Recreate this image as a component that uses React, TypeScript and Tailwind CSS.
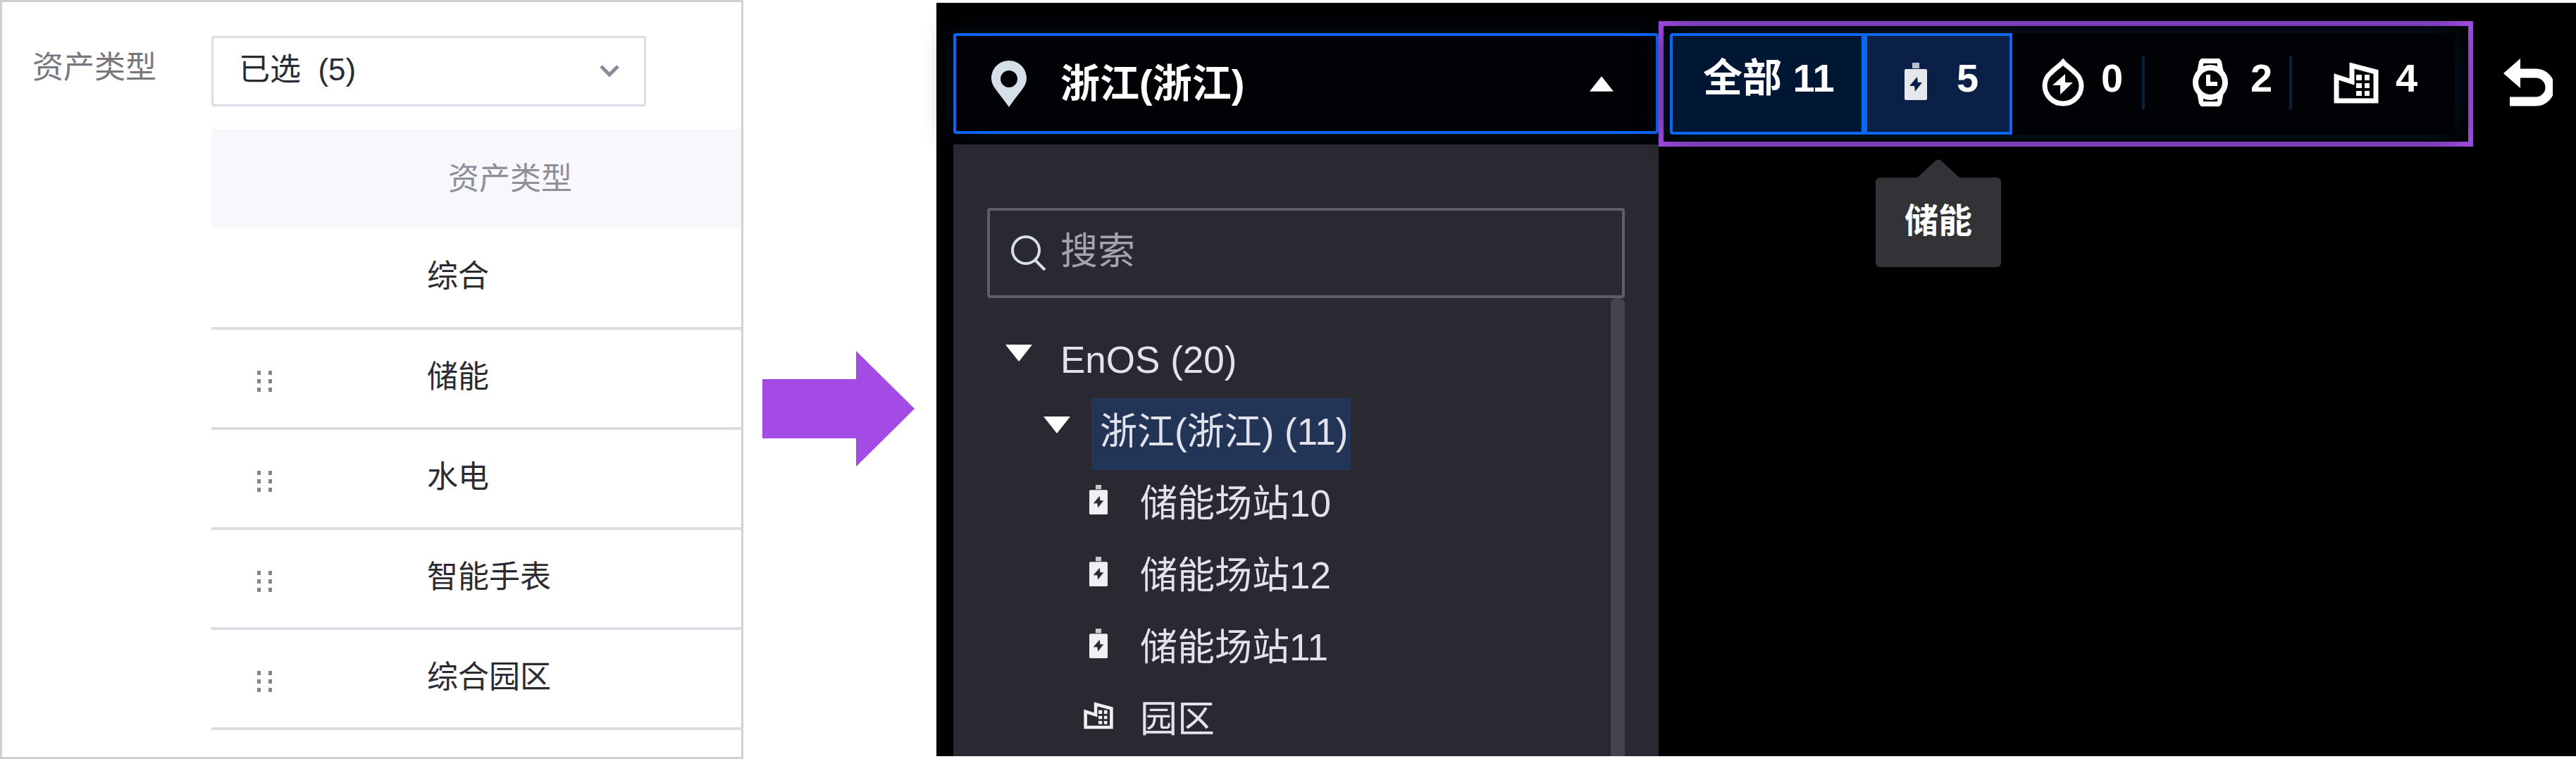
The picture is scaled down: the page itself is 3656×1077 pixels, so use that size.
import type { ReactNode } from "react"

interface IconProps {
  className?: string
}

interface AssetTab {
  name: string
  count: number
  icon: ReactNode
  className: string
}

interface TreeLeaf {
  name: string
  icon: ReactNode
}

function BatteryIcon({ className }: IconProps) {
  return (
    <svg viewBox="0 0 32 53" preserveAspectRatio="none" className={className} fill="currentColor" aria-hidden="true">
      <path d="M11 0h10v8H11z" opacity="0.8" />
      <path
        fillRule="evenodd"
        d="M2 9h28a2 2 0 0 1 2 2v40a2 2 0 0 1-2 2H2a2 2 0 0 1-2-2V11a2 2 0 0 1 2-2zm16 11L7 33h7l1 8 10-13h-6z"
      />
    </svg>
  )
}

function DropIcon({ className }: IconProps) {
  return (
    <svg viewBox="0 0 60 68" className={className} fill="none" aria-hidden="true">
      <path
        d="M30 5C26 10 20 13 12 21a24 24 0 0 0-8 17c0 15 12 26 26 26s26-11 26-26a24 24 0 0 0-8-17C40 13 34 10 30 5z"
        stroke="currentColor"
        strokeWidth="7"
      />
      <path d="M33 22 15 38h11v13l18-17H33z" fill="currentColor" />
    </svg>
  )
}

function WatchIcon({ className }: IconProps) {
  return (
    <svg viewBox="0 0 50 68" className={className} aria-hidden="true">
      <path
        fill="currentColor"
        fillRule="evenodd"
        d="M12 0h26l3 4 3 16-8-4H14l-8 4L9 4zM15 7v4h20V7zM12 68h26l3-4 3-16-8 4H14l-8-4 3 16zM15 57v4h20v-4z"
      />
      <circle cx="25" cy="34" r="21" fill="none" stroke="currentColor" strokeWidth="8" />
      <path d="M22 23v13h13" fill="none" stroke="currentColor" strokeWidth="6" />
    </svg>
  )
}

function BuildingIcon({ className }: IconProps) {
  return (
    <svg viewBox="0 0 64 60" className={className} aria-hidden="true">
      <path
        d="M4 56V22l22 7V6l34 9v41z"
        fill="none"
        stroke="currentColor"
        strokeWidth="7"
      />
      <path fill="currentColor" d="M32 19h8v8h-8zM44 19h7v8h-7zM32 31h8v7h-8zM44 31h7v7h-7zM32 42h8v7h-8zM44 42h7v7h-7z" />
    </svg>
  )
}

function PinIcon({ className }: IconProps) {
  return (
    <svg viewBox="0 0 50 66" className={className} fill="currentColor" aria-hidden="true">
      <path
        fillRule="evenodd"
        d="M25 0C11 0 0 11 0 25c0 12 10 19 25 41 15-22 25-29 25-41C50 11 39 0 25 0zm0 14a12 12 0 1 1 0 24 12 12 0 0 1 0-24z"
      />
    </svg>
  )
}

function SearchIcon({ className }: IconProps) {
  return (
    <svg viewBox="0 0 50 50" className={className} fill="none" stroke="currentColor" strokeWidth="4" aria-hidden="true">
      <circle cx="21" cy="21" r="19" />
      <path d="M34 35 48 49" />
    </svg>
  )
}

function BackIcon({ className }: IconProps) {
  return (
    <svg viewBox="0 0 70 70" className={className} aria-hidden="true">
      <path d="M24 1v42L0 22z" fill="currentColor" />
      <path d="M18 22h28a20 20 0 0 1 0 40H9" fill="none" stroke="currentColor" strokeWidth="13" />
    </svg>
  )
}

function CaretIcon({ className }: IconProps) {
  return (
    <svg viewBox="0 0 38 24" className={className} fill="currentColor" aria-hidden="true">
      <path d="M0 0h38L19 24z" />
    </svg>
  )
}

function DragIcon({ className }: IconProps) {
  return (
    <svg viewBox="0 0 24 34" className={className} fill="currentColor" aria-hidden="true">
      <path d="M1 2h5v6H1zM17 2h5v6h-5zM1 14h5v6H1zM17 14h5v6h-5zM1 26h5v6H1zM17 26h5v6h-5z" />
    </svg>
  )
}

const assetTypes = ["综合", "储能", "水电", "智能手表", "综合园区"]

const leaves: TreeLeaf[] = [
  { name: "储能场站10", icon: <BatteryIcon className="h-[42px] w-[26px]" /> },
  { name: "储能场站12", icon: <BatteryIcon className="h-[42px] w-[26px]" /> },
  { name: "储能场站11", icon: <BatteryIcon className="h-[42px] w-[26px]" /> },
  { name: "园区", icon: <BuildingIcon className="h-10 w-[42px]" /> },
]

const tabs: AssetTab[] = [
  { name: "水电", count: 0, icon: <DropIcon className="h-[68px] w-[60px]" />, className: "w-[188px] pl-[42px]" },
  { name: "智能手表", count: 2, icon: <WatchIcon className="mr-2 h-[68px] w-[50px]" />, className: "w-[209px] pl-[68px]" },
  { name: "综合园区", count: 4, icon: <BuildingIcon className="h-[60px] w-16" />, className: "w-[231px] pl-[59px]" },
]

function AssetTypeCard() {
  return (
    <section className="border-3 border-[#d0d0d0] bg-white pt-12 pl-[43px] text-[44px] text-[#2b2b33]">
      <div className="flex items-start">
        <label htmlFor="asset-type" className="w-[254px] shrink-0 pt-3 leading-[66px] text-[#77777f]">
          资产类型
        </label>
        <div className="relative w-[617px]">
          <select
            id="asset-type"
            className="h-[100px] w-full appearance-none rounded-sm border-3 border-[#dcdce4] bg-white pb-1 pl-9"
          >
            <option>已选{"\u00a0\u00a0"}(5)</option>
          </select>
          <svg
            viewBox="0 0 28 18"
            className="pointer-events-none absolute top-10 right-[38px] h-[18px] w-7"
            fill="none"
            stroke="#8a8a99"
            strokeWidth="5"
            aria-hidden="true"
          >
            <path d="M2 3 14 15 26 3" />
          </svg>
        </div>
      </div>
      <div className="mt-8 pl-[254px]">
        <table className="w-full border-collapse text-left">
          <thead>
            <tr className="h-[141px] bg-[#f7f7fc] text-[#8f8f9c]">
              <th className="w-[306px]" aria-label="排序" />
              <th className="pl-[30px] font-normal">资产类型</th>
            </tr>
          </thead>
          <tbody>
            {assetTypes.map((type, index) => (
              <tr key={type} className="h-[142px] border-b-4 border-[#dcdce4]">
                <td className="pt-2 pl-16">
                  {index > 0 && (
                    <button type="button" aria-label={`拖动${type}`} className="block text-[#858592]">
                      <DragIcon className="h-[34px] w-6" />
                    </button>
                  )}
                </td>
                <td className="pb-1">{type}</td>
              </tr>
            ))}
          </tbody>
        </table>
      </div>
    </section>
  )
}

function LocationPicker() {
  return (
    <div className="flex min-h-0 flex-col pt-[17px]">
      <button
        type="button"
        aria-expanded="true"
        className="flex h-[143px] shrink-0 items-center rounded-sm border-4 border-[#0b66f2] bg-[#010206] pr-[60px] pl-[50px] text-[56px] font-bold text-white shadow-[0_0_36px_#001220]"
      >
        <PinIcon className="h-[66px] w-[50px] text-[#d5dfe8]" />
        <span className="ml-12 grow text-left">浙江(浙江)</span>
        <CaretIcon className="h-[22px] w-[34px] rotate-180" />
      </button>
      <div className="mt-[15px] flex min-h-0 grow flex-col overflow-hidden bg-[#2a2830] px-12 pt-[90px] text-[53px] text-[#e2e2ea]">
        <label className="flex h-[128px] shrink-0 items-center rounded-sm border-4 border-[#5f5d69] pl-[30px]">
          <SearchIcon className="size-[50px] shrink-0 text-[#d5dfe8]" />
          <input
            type="text"
            aria-label="搜索"
            placeholder="搜索"
            className="ml-5 w-full min-w-0 bg-transparent pb-1 outline-none placeholder:text-[#a4a4ae]"
          />
        </label>
        <div className="flex min-h-0 grow">
          <ul className="grow pt-10 leading-[96px]">
            <li>
              <div className="flex h-[102px] pl-[26px]">
                <CaretIcon className="mt-[26px] h-6 w-[38px] text-white" />
                <span className="ml-10">EnOS (20)</span>
              </div>
              <ul>
                <li>
                  <div className="flex h-[102px] pl-20">
                    <CaretIcon className="mt-[26px] h-6 w-[38px] text-white" />
                    <span className="ml-[30px] bg-[#233557] pr-1 pl-3">浙江(浙江) (11)</span>
                  </div>
                  <ul>
                    {leaves.map((leaf) => (
                      <li key={leaf.name} className="flex h-[102px] pl-[135px]">
                        <span className="flex h-[84px] w-[46px] items-center justify-center text-[#f0f0f2]">
                          {leaf.icon}
                        </span>
                        <span className="ml-9">{leaf.name}</span>
                      </li>
                    ))}
                  </ul>
                </li>
              </ul>
            </li>
          </ul>
          <div className="w-5 shrink-0 rounded-t-lg bg-[#45434e]" />
        </div>
      </div>
    </div>
  )
}

function AssetTabs() {
  return (
    <div className="h-[178px] border-7 border-[#a44be6] py-[10px] pr-[19px] pl-[9px] text-[56px] font-bold text-white">
      <div className="flex h-full bg-[#010206] leading-[60px] shadow-[0_0_36px_#001a2c]">
        <button type="button" className="flex w-[276px] shrink-0 rounded-l-sm border-4 border-[#0b66f2] bg-[#001733] pt-[30px] pl-[43px]">
          全部 11
        </button>
        <div className="relative shrink-0">
          <button
            type="button"
            aria-label="储能 5"
            aria-describedby="tab-tip"
            className="flex h-full w-[210px] items-start gap-[42px] border-4 border-[#0b66f2] bg-[#0a2046] pt-[30px] pl-[53px]"
          >
            <BatteryIcon className="mt-2 h-[53px] w-8 text-[#e6e6ec]" />
            5
          </button>
          <div id="tab-tip" role="tooltip" className="absolute top-[179px] left-4 flex w-[178px] flex-col items-center">
            <svg viewBox="0 0 60 26" className="h-[26px] w-[60px]" fill="#323237" aria-hidden="true">
              <path d="M0 26 26 2Q30-1 34 2L60 26z" />
            </svg>
            <div className="h-[127px] w-full rounded-md bg-[#323237] pt-8 text-center text-[48px]">储能</div>
          </div>
        </div>
        {tabs.map((tab, index) => (
          <button
            key={tab.name}
            type="button"
            aria-label={`${tab.name} ${tab.count}`}
            className={`flex shrink-0 items-center justify-between pb-1 ${tab.className}`}
          >
            <span className="flex items-center gap-6">
              {tab.icon}
              <span className="pb-3">{tab.count}</span>
            </span>
            {index < tabs.length - 1 && <span className="h-[76px] w-1 bg-[#06223a]" />}
          </button>
        ))}
      </div>
    </div>
  )
}

export default function App() {
  return (
    <main className="grid h-screen grid-cols-[1055fr_274fr_2327fr] bg-white font-['Liberation_Sans','Noto_Sans_CJK_SC',sans-serif]">
      <AssetTypeCard />
      <div className="flex items-center pt-[82px] pl-[27px]">
        <svg viewBox="0 0 216 164" className="w-[216px] shrink-0" fill="#a44be6" aria-hidden="true">
          <path d="M0 40h133V0l83 82-83 82v-40H0z" />
        </svg>
      </div>
      <section className="mt-1 mb-1 grid min-h-0 grid-cols-[1001fr_1156fr_146fr] grid-rows-1 bg-black pt-[26px] pl-6">
        <LocationPicker />
        <AssetTabs />
        <button type="button" aria-label="返回" className="mt-[52px] ml-[43px] h-[70px] w-[70px] text-white">
          <BackIcon className="size-full" />
        </button>
      </section>
    </main>
  )
}
